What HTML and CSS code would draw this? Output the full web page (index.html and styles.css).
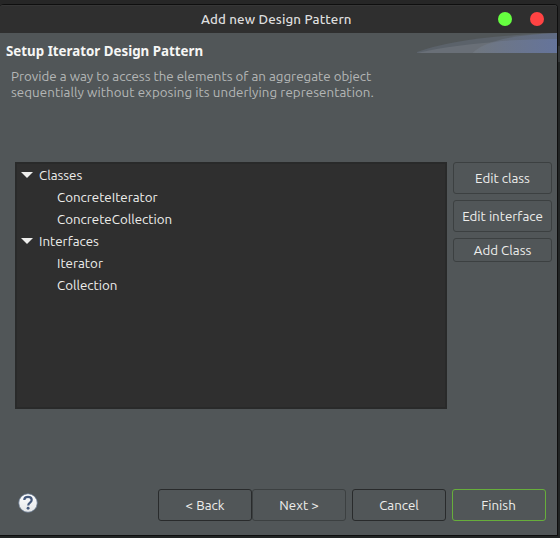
FILE: index.html
```html
<!DOCTYPE html>
<html lang="en">
<head>
<meta charset="utf-8">
<title>Add new Design Pattern</title>
<link rel="stylesheet" href="styles.css">
</head>
<body>
<main class="dialog">
  <header class="titlebar">
    <h1 class="title">Add new Design Pattern</h1>
    <div class="controls"><i class="dot green"></i><i class="dot red"></i></div>
  </header>
  <section class="banner">
    <div class="intro">
      <h2 class="heading">Setup Iterator Design Pattern</h2>
      <p class="description">Provide a way to access the elements of an aggregate object<br><span class="second-line">sequentially without exposing its underlying representation.</span></p>
    </div>
    <svg class="swoosh" width="140" height="20" viewBox="0 0 140 20">
      <defs><linearGradient id="sweep"><stop offset="0" stop-color="#70777f"/><stop offset="1" stop-color="#65749b"/></linearGradient></defs>
      <path d="M0 19Q44 3 140 0V20H0Z" fill="#5b626a"/>
      <path d="M0 20Q52 8 140 6V20Z" fill="#696f77"/>
      <path d="M56 20Q70 3 140 0V20Z" fill="url(#sweep)" opacity=".55"/>
      <path d="M56 20Q64 11 85 8Q112 6 140 6V20Z" fill="url(#sweep)"/>
    </svg>
  </section>
  <section class="content">
    <ul class="tree">
      <li class="row"><svg class="arrow" width="12" height="6"><path d="M0 0H12L6 6Z"/></svg>Classes</li>
      <li class="row child">ConcreteIterator</li>
      <li class="row child">ConcreteCollection</li>
      <li class="row"><svg class="arrow" width="12" height="6"><path d="M0 0H12L6 6Z"/></svg>Interfaces</li>
      <li class="row child">Iterator</li>
      <li class="row child">Collection</li>
    </ul>
    <div class="actions">
      <button class="button">Edit class</button>
      <button class="button">Edit interface</button>
      <button class="button short">Add Class</button>
    </div>
  </section>
  <footer class="footer">
    <svg class="help" width="20" height="20" viewBox="0 0 20 20">
      <defs><linearGradient id="disc" x2="0" y2="1"><stop stop-color="#fff"/><stop offset="1" stop-color="#e4e6e7"/></linearGradient></defs>
      <circle cx="10" cy="10" r="9.3" fill="url(#disc)" stroke="#61728a" stroke-width=".8"/>
      <path d="M6.3 7C6.3 4.7 7.9 3.9 10 3.9C12.2 3.9 13.7 5 13.7 6.9C13.7 9.7 10.2 9.4 10.2 12.6" fill="none" stroke="#465a7c" stroke-width="2.2"/>
      <circle cx="10.1" cy="15.3" r="1.45" fill="#465a7c"/>
    </svg>
    <div class="navigation">
      <button class="button dark">&lt; Back</button>
      <button class="button">Next &gt;</button>
      <button class="button dark gap">Cancel</button>
      <button class="button finish gap">Finish</button>
    </div>
  </footer>
</main>
</body>
</html>
```
FILE: styles.css
```css
* { box-sizing: border-box; }
body {
  margin: 0;
  width: 560px;
  height: 538px;
  overflow: hidden;
  padding-top: 4px;
  background: linear-gradient(#262626 0 46px, #343738 46px 62px, #212424 62px);
  font-family: Ubuntu, "Noto Sans", sans-serif;
  font-size: 13.33px;
  color: #eeeeec;
}
.dialog {
  width: 558px;
  height: 532px;
  display: flex;
  flex-direction: column;
  background: #515658;
  border: solid #0e0e0e;
  border-width: 1px 1px 1px 0;
  border-radius: 4px 4px 0 0;
  overflow: hidden;
}
.titlebar {
  height: 28px;
  flex: none;
  display: grid;
  grid-template-columns: 201px 1fr auto;
  align-items: start;
  background: #2f2f2f;
  border-top: 1px solid #363636;
  padding-right: 13px;
}
.title {
  grid-column: 2;
  margin: 0;
  font-size: 13.33px;
  line-height: 27px;
  font-weight: 500;
  letter-spacing: .13px;
  color: #dedede;
  white-space: nowrap;
}
.controls { display: flex; gap: 18px; margin-top: 6px; }
.dot { width: 14px; height: 14px; border-radius: 50%; }
.green { background: #66ff40; }
.red { background: #ff4343; }
.banner {
  height: 129px;
  display: flex;
  justify-content: space-between;
}
.intro { padding: 9px 0 0 6px; white-space: nowrap; }
.heading { margin: 0; font-family: "Noto Sans", sans-serif; font-size: 13.33px; line-height: 18px; font-weight: 700; color: #f6f6f5; }
.description { margin: 9px 0 0 5px; line-height: 16px; color: #b4b6b6; }
.second-line { letter-spacing: .06px; }
.swoosh { flex: none; }
.content { display: flex; gap: 6px; padding-left: 15px; height: 247px; }
.tree {
  width: 432px;
  margin: 0;
  padding: 0 0 0 4px;
  list-style: none;
  background: #2f2f2f;
  border: 2px solid #292a2a;
}
.row { height: 22px; display: flex; align-items: center; gap: 6px; }
.child { padding-left: 36px; }
.arrow { fill: #eeeeec; }
.actions { width: 99px; display: flex; flex-direction: column; gap: 6px; }
.button {
  height: 32px;
  padding: 0;
  display: flex;
  align-items: center;
  justify-content: center;
  font: inherit;
  color: inherit;
  white-space: nowrap;
  background: transparent;
  border: 1px solid #3c4041;
  border-radius: 3px;
}
.short { height: 24px; }
.footer {
  margin-top: auto;
  height: 46px;
  display: flex;
  justify-content: space-between;
  padding: 0 11px 0 18px;
}
.help { margin-top: 4px; }
.navigation { display: flex; }
.navigation .button { width: 94px; }
.navigation .gap { margin-left: 6px; }
.dark { border-color: #292b2c; }
.navigation .finish { border-color: #67ae3b; padding-right: 1px; }
```
